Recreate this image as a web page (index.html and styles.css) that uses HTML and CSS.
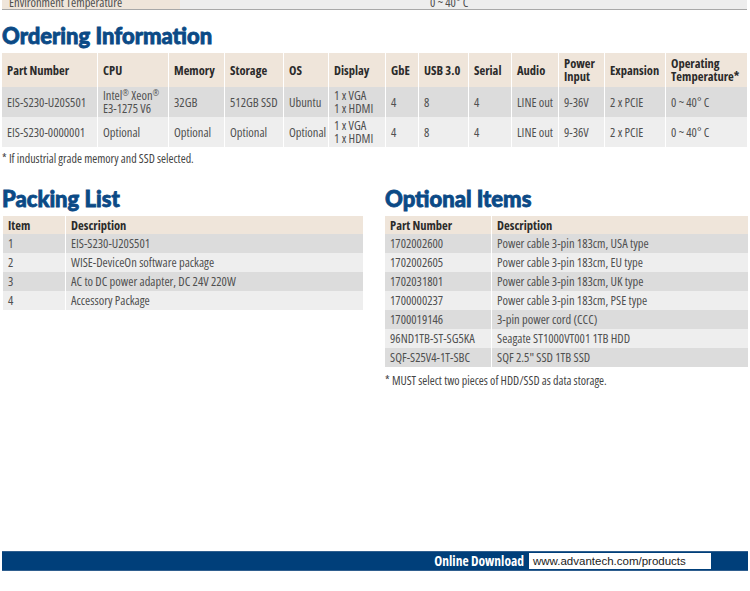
FILE: index.html
```html
<!DOCTYPE html>
<html>
<head>
<meta charset="utf-8">
<link rel="stylesheet" href="styles.css">
</head>
<body>
<div class="page">
  <div class="topstrip">
    <div class="ts-label">Environment Temperature</div>
    <div class="ts-value">0 ~ 40° C</div>
  </div>

  <h2 class="title title-order">Ordering Information</h2>

  <div class="otable">
    <div class="c h"><span>Part Number</span></div>
    <div class="c h"><span>CPU</span></div>
    <div class="c h"><span>Memory</span></div>
    <div class="c h"><span>Storage</span></div>
    <div class="c h"><span>OS</span></div>
    <div class="c h"><span>Display</span></div>
    <div class="c h"><span>GbE</span></div>
    <div class="c h"><span>USB 3.0</span></div>
    <div class="c h"><span>Serial</span></div>
    <div class="c h"><span>Audio</span></div>
    <div class="c h"><span>Power<br>Input</span></div>
    <div class="c h"><span>Expansion</span></div>
    <div class="c h"><span>Operating<br>Temperature*</span></div>

    <div class="c d1"><span>EIS-S230-U20S501</span></div>
    <div class="c d1"><span>Intel<sup>®</sup> Xeon<sup>®</sup><br>E3-1275 V6</span></div>
    <div class="c d1"><span>32GB</span></div>
    <div class="c d1"><span>512GB SSD</span></div>
    <div class="c d1"><span>Ubuntu</span></div>
    <div class="c d1"><span>1 x VGA<br>1 x HDMI</span></div>
    <div class="c d1"><span>4</span></div>
    <div class="c d1"><span>8</span></div>
    <div class="c d1"><span>4</span></div>
    <div class="c d1"><span>LINE out</span></div>
    <div class="c d1"><span>9-36V</span></div>
    <div class="c d1"><span>2 x PCIE</span></div>
    <div class="c d1"><span>0 ~ 40° C</span></div>

    <div class="c d2"><span>EIS-S230-0000001</span></div>
    <div class="c d2"><span>Optional</span></div>
    <div class="c d2"><span>Optional</span></div>
    <div class="c d2"><span>Optional</span></div>
    <div class="c d2"><span>Optional</span></div>
    <div class="c d2"><span>1 x VGA<br>1 x HDMI</span></div>
    <div class="c d2"><span>4</span></div>
    <div class="c d2"><span>8</span></div>
    <div class="c d2"><span>4</span></div>
    <div class="c d2"><span>LINE out</span></div>
    <div class="c d2"><span>9-36V</span></div>
    <div class="c d2"><span>2 x PCIE</span></div>
    <div class="c d2"><span>0 ~ 40° C</span></div>
  </div>
  <p class="note">* If industrial grade memory and SSD selected.</p>

  <div class="cols">
    <section class="packing">
      <h2 class="title">Packing List</h2>
      <div class="ltable pack">
        <div class="r h"><span>Item</span><span>Description</span></div>
        <div class="r d1"><span>1</span><span>EIS-S230-U20S501</span></div>
        <div class="r d2"><span>2</span><span>WISE-DeviceOn software package</span></div>
        <div class="r d1"><span>3</span><span>AC to DC power adapter, DC 24V 220W</span></div>
        <div class="r d2"><span>4</span><span>Accessory Package</span></div>
      </div>
    </section>
    <section class="optional">
      <h2 class="title">Optional Items</h2>
      <div class="ltable opt">
        <div class="r h"><span>Part Number</span><span>Description</span></div>
        <div class="r d1"><span>1702002600</span><span>Power cable 3-pin 183cm, USA type</span></div>
        <div class="r d2"><span>1702002605</span><span>Power cable 3-pin 183cm, EU type</span></div>
        <div class="r d1"><span>1702031801</span><span>Power cable 3-pin 183cm, UK type</span></div>
        <div class="r d2"><span>1700000237</span><span>Power cable 3-pin 183cm, PSE type</span></div>
        <div class="r d1"><span>1700019146</span><span>3-pin power cord (CCC)</span></div>
        <div class="r d2"><span>96ND1TB-ST-SG5KA</span><span>Seagate ST1000VT001 1TB HDD</span></div>
        <div class="r d1"><span>SQF-S25V4-1T-SBC</span><span>SQF 2.5" SSD 1TB SSD</span></div>
      </div>
      <p class="note">* MUST select two pieces of HDD/SSD as data storage.</p>
    </section>
  </div>

  <footer class="footer">
    <span class="dl-label">Online Download</span>
    <span class="dl-url">www.advantech.com/products</span>
  </footer>
</div>
</body>
</html>
```

FILE: styles.css
```css
html, body {
  margin: 0;
  padding: 0;
  background: #ffffff;
}
body {
  font-family: "Open Sans", "Liberation Sans", Arial, sans-serif;
  font-stretch: 75%;
  color: #4a4a4a;
}
.page {
  width: 750px;
  height: 591px;
  display: flex;
  flex-direction: column;
  overflow: hidden;
}
.topstrip {
  display: flex;
  height: 9px;
  margin: 0 3px 0 2px;
  border-bottom: 1px solid #a8a8a8;
  overflow: hidden;
  font-size: 12.5px;
  line-height: 13px;
  color: #505050;
}
.ts-label {
  width: 178px;
  background: #efe5da;
  padding-left: 7px;
  margin-top: -4px;
  box-sizing: border-box;
  height: 14px;
}
.ts-value {
  flex: 1;
  background: #ededed;
  padding-left: 250px;
  margin-top: -4px;
  height: 14px;
}
.title {
  margin: 0;
  font-family: "Lato", "DejaVu Sans", sans-serif;
  font-stretch: normal;
  font-weight: 900;
  font-size: 22px;
  line-height: 26px;
  color: #0b4a86;
  -webkit-text-stroke: 0.8px #0b4a86;
}
.title-order {
  margin: 13px 0 0 2px;
}
.otable {
  margin: 4px 3px 0 2px;
  display: grid;
  grid-template-columns: 95px 71px 56px 59px 45px 57px 33px 50px 43px 47px 46px 61px 82px;
  grid-template-rows: 34px 30px 30px;
  font-size: 12.5px;
  font-stretch: 78%;
}
.c {
  display: flex;
  align-items: center;
  padding-left: 5px;
  border-left: 1px solid #ffffff;
  line-height: 13px;
  color: #505050;
  white-space: nowrap;
}
.c:nth-child(13n+1) {
  border-left: none;
}
.c.h {
  background: #efe5da;
  font-weight: bold;
  color: #2b2b2b;
  font-stretch: 75%;
  line-height: 13px;
}
.c.d1 { background: #dcdcdc; }
.c.d2 { background: #eeeeee; }
.c sup {
  font-size: 8px;
  line-height: 0;
  vertical-align: 4px;
}
.note {
  margin: 5px 0 0 2px;
  font-size: 12px;
  font-stretch: 80%;
  line-height: 13px;
  color: #444;
}
.cols {
  display: flex;
  margin-top: 21px;
  padding-left: 3px;
}
.packing {
  width: 360px;
}
.packing .title {
  margin-left: -1px;
}
.optional {
  width: 363px;
  margin-left: 22px;
}
.ltable {
  margin-top: 4px;
  font-size: 12.5px;
  font-stretch: 78%;
}
.r {
  display: grid;
  height: 19px;
  align-items: center;
  color: #505050;
  white-space: nowrap;
}
.pack .r { grid-template-columns: 62px 1fr; }
.opt .r { grid-template-columns: 106px 1fr; }
.r span {
  display: flex;
  align-items: center;
  height: 100%;
  padding-left: 5px;
}
.r span + span {
  border-left: 1px solid #ffffff;
}
.r.h {
  height: 18px;
  background: #efe5da;
  font-weight: bold;
  font-stretch: 75%;
  color: #2b2b2b;
}
.r.d1 { background: #dcdcdc; }
.r.d2 { background: #eeeeee; }
.optional .note {
  margin-left: 0;
  margin-top: 7px;
}
.footer {
  margin: auto 2px 20px 2px;
  height: 20px;
  background: #003f7a;
  border-top: 1px solid #2f5f8f;
  border-bottom: 1px solid #2f5f8f;
  box-sizing: border-box;
  display: flex;
  align-items: center;
  justify-content: flex-end;
  padding-right: 37px;
}
.dl-label {
  color: #ffffff;
  font-weight: bold;
  font-size: 13.5px;
  margin-right: 5px;
}
.dl-url {
  background: #ffffff;
  color: #222;
  font-stretch: normal;
  font-family: "Liberation Sans", Arial, sans-serif;
  font-size: 11.5px;
  width: 182px;
  height: 16px;
  line-height: 16px;
  padding-left: 4px;
  box-sizing: border-box;
}
```
